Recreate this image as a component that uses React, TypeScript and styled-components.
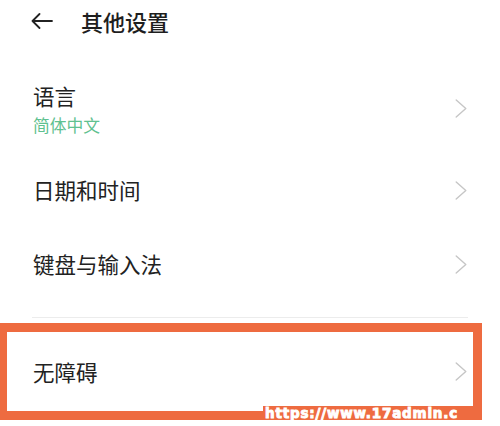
import React from "react";
import styled, { createGlobalStyle } from "styled-components";

const Global = createGlobalStyle`
  html, body { margin: 0; padding: 0; background: #ffffff; }
  body { font-family: "Noto Sans CJK SC", "Noto Sans", sans-serif; color: #222; }
`;

const Page = styled.div`
  width: 500px;
  height: 426px;
  background: #fff;
  overflow: hidden;
  display: flex;
  flex-direction: column;
`;

const Header = styled.header`
  height: 42px;
  display: flex;
  align-items: center;
  padding-left: 31px;
  gap: 28px;
`;

const Title = styled.h1`
  margin: 0;
  font-size: 22px;
  font-weight: 500;
  line-height: 42px;
  color: #1e1e1e;
`;

const List = styled.div`
  display: flex;
  flex-direction: column;
  padding-top: 22px;
`;

const Row = styled.div<{ $h: number }>`
  height: ${(p) => p.$h}px;
  display: flex;
  align-items: center;
  justify-content: space-between;
  padding: 0 33px 0 33px;
  box-sizing: border-box;
`;

const Texts = styled.div`
  display: flex;
  flex-direction: column;
  gap: 2px;
`;

const ItemTitle = styled.div`
  font-size: 21.5px;
  line-height: 30px;
  color: #222;
`;

const Sub = styled.div`
  font-size: 16.8px;
  line-height: 24px;
  color: #5fc190;
`;

const Divider = styled.hr`
  margin: 16px 32px 0 32px;
  border: 0;
  height: 1px;
  background: #ececec;
`;

const Highlight = styled.div`
  position: relative;
  margin-top: 5px;
  width: 482px;
  height: 97px;
  box-sizing: border-box;
  border: 9px solid #ee6b40;
  border-left-width: 7px;
`;

const HighlightRow = styled.div`
  height: 100%;
  display: flex;
  align-items: center;
  justify-content: space-between;
  padding: 0 6px 0 26px;
`;

const Watermark = styled.div`
  position: absolute;
  right: -9px;
  bottom: -9px;
  width: 219px;
  height: 14px;
  overflow: hidden;
  background: #ee6b40;
  font-family: "DejaVu Sans", "Liberation Sans", sans-serif;
  font-weight: 700;
  font-size: 13.5px;
  line-height: 14px;
  letter-spacing: 0.8px;
  color: #fff;
  white-space: nowrap;
  -webkit-text-stroke: 0.9px #fff;
  padding-left: 2px;
  box-sizing: border-box;
`;

const BackIcon = () => (
  <svg width="22" height="16" viewBox="0 0 22 16" fill="none">
    <path d="M21 8H1.5M8.5 1L1.5 8l7 7" stroke="#222" strokeWidth="1.8" strokeLinecap="round" strokeLinejoin="round" />
  </svg>
);

const Chevron = () => (
  <svg width="12" height="19" viewBox="0 0 12 19" fill="none">
    <path d="M1.2 1l9.6 8.5-9.6 8.5" stroke="#c6c6c6" strokeWidth="1.4" strokeLinecap="round" strokeLinejoin="round" />
  </svg>
);

export default function App() {
  return (
    <Page>
      <Global />
      <Header>
        <BackIcon />
        <Title>其他设置</Title>
      </Header>
      <List>
        <Row $h={89}>
          <Texts>
            <ItemTitle>语言</ItemTitle>
            <Sub>简体中文</Sub>
          </Texts>
          <Chevron />
        </Row>
        <Row $h={74}>
          <ItemTitle>日期和时间</ItemTitle>
          <Chevron />
        </Row>
        <Row $h={74}>
          <ItemTitle>键盘与输入法</ItemTitle>
          <Chevron />
        </Row>
      </List>
      <Divider />
      <Highlight>
        <HighlightRow>
          <ItemTitle>无障碍</ItemTitle>
          <Chevron />
        </HighlightRow>
        <Watermark>https://www.17admin.c</Watermark>
      </Highlight>
    </Page>
  );
}
